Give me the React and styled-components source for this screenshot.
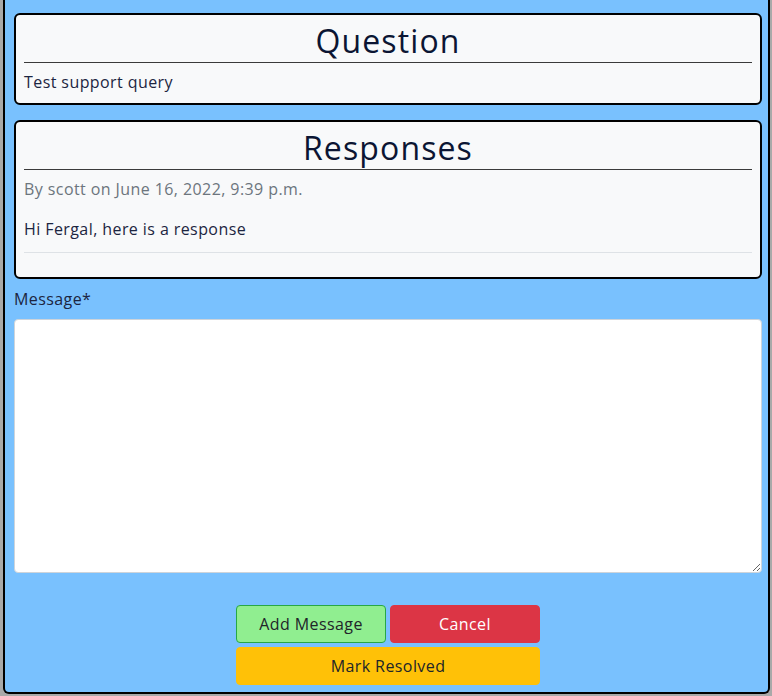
import React from "react";
import styled, { createGlobalStyle } from "styled-components";

const GlobalStyle = createGlobalStyle`
  * {
    box-sizing: border-box;
  }
  html, body {
    margin: 0;
    padding: 0;
    background: #a9a9a9;
  }
  body {
    font-family: "Open Sans", "Noto Sans", sans-serif;
    font-size: 16px;
    line-height: 1.5;
    letter-spacing: 0.026em;
    color: #1c2541;
  }
`;

const Page = styled.div`
  padding: 0 2px 2px 3px;
  height: 696px;
  overflow: hidden;
`;

const Panel = styled.div`
  background: #79c1fe;
  border: 2px solid #000;
  border-top: none;
  border-radius: 0 0 6px 6px;
  padding: 13px 6px 7px 9px;
  display: flex;
  flex-direction: column;
`;

const Card = styled.section`
  background: #f8f9fa;
  border: 2px solid #000;
  border-radius: 6px;
  padding: 7px 8px ${(props) => props.bottom || "8px"};
  margin-bottom: ${(props) => props.gap || "0"};
`;

const Heading = styled.h2`
  margin: 0;
  font-size: 32px;
  font-weight: 400;
  line-height: 1.2;
  letter-spacing: 0.035em;
  text-align: center;
  color: #0b1533;
`;

const Rule = styled.hr`
  margin: ${(props) => props.margin || "2px 0 7px"};
  border: 0;
  border-top: 1px solid ${(props) => props.colour || "#3a3a3a"};
`;

const Text = styled.p`
  margin: ${(props) => props.margin || "0"};
  color: ${(props) => props.colour || "#1c2541"};
`;

const Label = styled.label`
  display: block;
  margin: 8px 0 8px;
  color: #1c2541;
`;

const MessageBox = styled.textarea`
  display: block;
  width: 100%;
  height: 254px;
  background: #fff;
  border: 1px solid #ced4da;
  border-radius: 4px;
  padding: 6px 12px;
  font: inherit;
  resize: vertical;
  outline: none;
`;

const Actions = styled.div`
  margin-top: 32px;
  display: grid;
  grid-template-columns: 150px 150px;
  gap: 4px;
  justify-content: center;
`;

const Button = styled.button`
  height: 38px;
  font-family: inherit;
  font-size: 16px;
  letter-spacing: inherit;
  border-radius: 4px;
  border: 1px solid ${(props) => props.border || "transparent"};
  background: ${(props) => props.bg};
  color: ${(props) => props.fg || "#212529"};
  grid-column: ${(props) => (props.wide ? "1 / span 2" : "auto")};
  cursor: pointer;
`;

export default function App() {
  return (
    <>
      <GlobalStyle />
      <Page>
        <Panel>
          <Card gap="15px" bottom="9px">
            <Heading>Question</Heading>
            <Rule />
            <Text>Test support query</Text>
          </Card>
          <Card bottom="8px">
            <Heading>Responses</Heading>
            <Rule margin="1px 0 7px" />
            <Text colour="#6c757d" margin="0 0 16px">
              By scott on June 16, 2022, 9:39 p.m.
            </Text>
            <Text margin="0 0 11px">Hi Fergal, here is a response</Text>
            <Rule colour="#dee2e6" margin="0 0 16px" />
          </Card>
          <Label htmlFor="message">Message*</Label>
          <MessageBox id="message" />
          <Actions>
            <Button bg="#90ee90" border="#28a745">
              Add Message
            </Button>
            <Button bg="#dc3545" border="#dc3545" fg="#fff">
              Cancel
            </Button>
            <Button wide bg="#ffc107" border="#ffc107">
              Mark Resolved
            </Button>
          </Actions>
        </Panel>
      </Page>
    </>
  );
}
